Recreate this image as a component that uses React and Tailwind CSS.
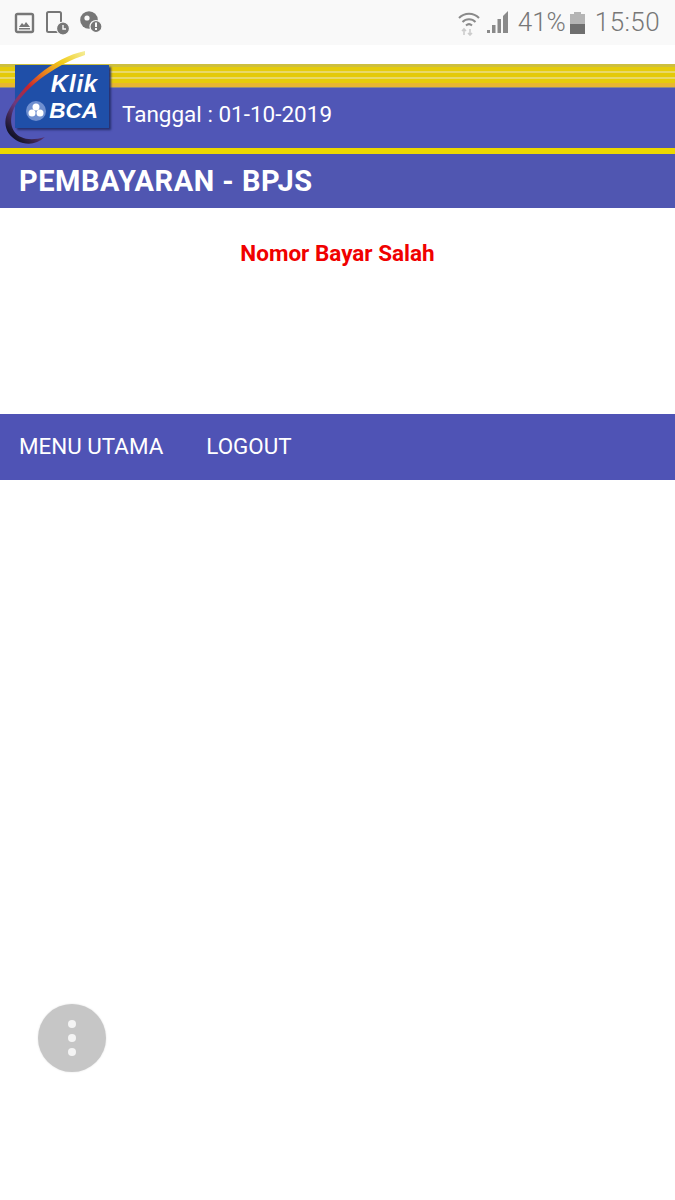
import React from 'react';

function StatusBar() {
  return (
    <div className="flex h-[45px] items-center justify-between bg-[#f9f9f9] pl-[14px] pr-[15px] text-[#777777]">
      <div className="flex items-center">
        <svg width="22" height="22" viewBox="0 0 22 22" className="mt-[1px]">
          <rect x="2" y="2" width="17" height="18" rx="1.5" fill="none" stroke="#777777" strokeWidth="2.4" />
          <path d="M5 15l3-4 2 2 2-3 4 5z" fill="#777777" />
          <rect x="5" y="16" width="11" height="1.5" fill="#777777" />
        </svg>
        <svg width="26" height="26" viewBox="0 0 26 26" className="ml-[9px] mt-[1px]">
          <rect x="2" y="2" width="14" height="20" rx="1.5" fill="none" stroke="#777777" strokeWidth="2" />
          <circle cx="18" cy="18.5" r="6.5" fill="#777777" stroke="#f9f9f9" strokeWidth="1.2" />
          <path d="M18 15v4h3" fill="none" stroke="#f9f9f9" strokeWidth="1.4" />
        </svg>
        <svg width="26" height="26" viewBox="0 0 26 26" className="ml-[7px]">
          <circle cx="11" cy="10" r="8.8" fill="#777777" />
          <circle cx="9" cy="8" r="2.6" fill="#f9f9f9" />
          <circle cx="18" cy="16.5" r="6" fill="#777777" stroke="#f9f9f9" strokeWidth="1.2" />
          <rect x="17" y="12.5" width="2" height="4.5" fill="#f9f9f9" />
          <rect x="17" y="18" width="2" height="2" fill="#f9f9f9" />
        </svg>
      </div>
      <div className="flex items-center">
        <svg width="24" height="26" viewBox="0 0 24 26">
          <path d="M2 8a14 14 0 0 1 20 0" fill="none" stroke="#8a8a8a" strokeWidth="2" />
          <path d="M5.5 12a9 9 0 0 1 13 0" fill="none" stroke="#8a8a8a" strokeWidth="2" />
          <path d="M9 15.5a4.5 4.5 0 0 1 6 0" fill="none" stroke="#8a8a8a" strokeWidth="2" />
          <path d="M7 25v-5M5 21l2-2 2 2M13 19v5M11 23l2 2 2-2" fill="none" stroke="#cccccc" strokeWidth="1.6" />
        </svg>
        <svg width="24" height="24" viewBox="0 0 24 24" className="ml-[5px]">
          <rect x="1" y="19" width="3" height="3" fill="#8a8a8a" />
          <rect x="6" y="14" width="3.5" height="8" fill="#8a8a8a" />
          <rect x="11.5" y="8" width="3.5" height="14" fill="#8a8a8a" />
          <path d="M17 5l5-5v22h-5z" fill="#8a8a8a" />
        </svg>
        <span className="ml-[8px] pb-[2px] font-['Roboto',sans-serif] text-[26px] font-light leading-none">41%</span>
        <div className="ml-[4px] flex h-[22px] w-[15px] flex-col items-center">
          <div className="h-[2px] w-[7px] bg-[#b5b5b5]" />
          <div className="h-[10px] w-full bg-[#b5b5b5]" />
          <div className="h-[10px] w-full bg-[#6f6f6f]" />
        </div>
        <span className="ml-[10px] pb-[2px] font-['Roboto',sans-serif] text-[26px] font-light leading-none tracking-[0.4px]">15:50</span>
      </div>
    </div>
  );
}

function Logo() {
  return (
    <div className="absolute left-0 top-[50px] h-[100px] w-[120px]">
      <div className="absolute left-[15px] top-[15px] flex h-[63px] w-[94px] flex-col items-end bg-[#1f4fa8] pr-[11px] pt-[8px] font-['Liberation_Sans',sans-serif] font-bold italic text-white shadow-[2px_2px_2px_#27306f]">
        <span className="text-[24px] leading-[22px] tracking-[0.8px]">Klik</span>
        <span className="mt-[5px] text-[22.5px] leading-[22px]">BCA</span>
      </div>
      <svg width="22" height="22" viewBox="0 0 22 22" className="absolute left-[25px] top-[50px]">
        <circle cx="11" cy="11" r="10" fill="#6f8fd0" />
        <circle cx="11" cy="7" r="3.5" fill="#ffffff" />
        <circle cx="7" cy="13" r="3.5" fill="#ffffff" />
        <circle cx="15" cy="13" r="3.5" fill="#ffffff" />
      </svg>
      <svg width="90" height="100" viewBox="0 0 90 100" className="absolute left-0 top-0">
        <defs>
          <linearGradient id="swoosh" x1="1" y1="0" x2="0.2" y2="1">
            <stop offset="0" stopColor="#f4ee9c" />
            <stop offset="0.22" stopColor="#f2cc18" />
            <stop offset="0.42" stopColor="#e8761e" />
            <stop offset="0.58" stopColor="#c8242c" />
            <stop offset="0.78" stopColor="#6a3a80" />
            <stop offset="1" stopColor="#14142a" />
          </linearGradient>
        </defs>
        <path d="M85 1C54 7 20 36 7 64c-5 13 2 25 16 29 8 2 15 0 22-6-10 3-18 3-24 0C12 83 8 72 14 58 27 34 60 13 85 5z" fill="url(#swoosh)" />
      </svg>
    </div>
  );
}

export default function App() {
  return (
    <div className="relative h-[1200px] w-[675px] overflow-hidden bg-white font-['Roboto',sans-serif]">
      <StatusBar />
      <div className="h-[19px]" />
      <div className="flex h-[24px] flex-col">
        <div className="h-[3px] bg-[#cdbf3e]" />
        <div className="h-[4px] bg-[#e6cc0a]" />
        <div className="h-[2px] bg-[#e8d868]" />
        <div className="h-[4px] bg-[#e4ca08]" />
        <div className="h-[2px] bg-[#e8d868]" />
        <div className="h-[4px] bg-[#e6cc0a]" />
        <div className="h-[4px] bg-[#e8b630]" />
        <div className="h-[1px] bg-[#8f8a80]" />
      </div>
      <div className="flex h-[60px] items-center bg-[#5056b6] pb-[6px] pl-[122px] text-[22.5px] text-white">
        Tanggal : 01-10-2019
      </div>
      <div className="h-[6px] bg-[#ecd800]" />
      <div className="flex h-[54px] items-center bg-[#5056b1] pl-[19px] pt-[1px] text-[29px] font-bold tracking-[0.5px] text-white">
        PEMBAYARAN - BPJS
      </div>
      <div className="h-[206px] pt-[31px] text-center text-[22.5px] font-bold leading-[28px] text-[#f00000]">
        Nomor Bayar Salah
      </div>
      <div className="flex h-[66px] items-center gap-[43px] bg-[#4f53b5] pl-[19px] text-[22.4px] text-white">
        <span>MENU UTAMA</span>
        <span>LOGOUT</span>
      </div>
      <Logo />
      <div className="absolute left-[38px] top-[1004px] flex h-[68px] w-[68px] flex-col items-center justify-center gap-[6px] rounded-full bg-[#c6c6c6] shadow-[0_0_2px_#dddddd]">
        <div className="h-[8px] w-[8px] rounded-full bg-[#f4f4f4]" />
        <div className="h-[8px] w-[8px] rounded-full bg-[#f4f4f4]" />
        <div className="h-[8px] w-[8px] rounded-full bg-[#f4f4f4]" />
      </div>
    </div>
  );
}
